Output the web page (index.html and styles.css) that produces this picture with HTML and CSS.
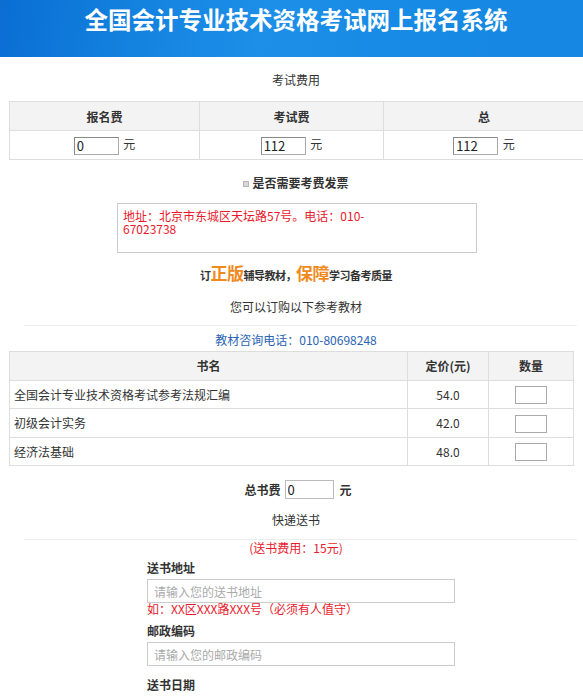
FILE: index.html
```html
<!DOCTYPE html>
<html lang="zh-CN">
<head>
<meta charset="utf-8">
<title>全国会计专业技术资格考试网上报名系统</title>
<link rel="stylesheet" href="styles.css">
</head>
<body>
<header class="banner">
  <h1 class="banner-title">全国会计专业技术资格考试网上报名系统</h1>
</header>
<main class="content">
  <div class="sec-title">考试费用</div>
  <table class="fee-table">
    <colgroup><col class="c1"><col class="c2"><col class="c3"></colgroup>
    <thead>
      <tr><th>报名费</th><th>考试费</th><th>总</th></tr>
    </thead>
    <tbody>
      <tr>
        <td><input class="fee-input" type="text" value="0"> 元</td>
        <td><input class="fee-input" type="text" value="112"> 元</td>
        <td><input class="fee-input" type="text" value="112"> 元</td>
      </tr>
    </tbody>
  </table>

  <div class="invoice-row"><span class="mini-check"></span><span class="invoice-label">是否需要考费发票</span></div>

  <div class="address-box">地址：北京市东城区天坛路57号。电话：010-<br>67023738</div>

  <div class="slogan">订<span class="big">正版</span>辅导教材，<span class="big">保障</span>学习备考质量</div>

  <div class="sub-title">您可以订购以下参考教材</div>
  <div class="divider"></div>
  <div class="phone">教材咨询电话：010-80698248</div>

  <table class="book-table">
    <colgroup><col class="b1"><col class="b2"><col class="b3"></colgroup>
    <thead>
      <tr><th>书名</th><th>定价(元)</th><th>数量</th></tr>
    </thead>
    <tbody>
      <tr><td class="name">全国会计专业技术资格考试参考法规汇编</td><td>54.0</td><td><input class="qty" type="text"></td></tr>
      <tr><td class="name">初级会计实务</td><td>42.0</td><td><input class="qty" type="text"></td></tr>
      <tr><td class="name">经济法基础</td><td>48.0</td><td><input class="qty" type="text"></td></tr>
    </tbody>
  </table>

  <div class="total-row"><span class="bold">总书费</span><input class="total-input" type="text" value="0"><span class="bold">元</span></div>

  <div class="sub-title express">快递送书</div>
  <div class="divider divider-2"></div>
  <div class="ship-fee">(送书费用：15元)</div>

  <div class="form">
    <div class="label first">送书地址</div>
    <input class="field" type="text" placeholder="请输入您的送书地址">
    <div class="hint">如：XX区XXX路XXX号（必须有人值守）</div>
    <div class="label second">邮政编码</div>
    <input class="field" type="text" placeholder="请输入您的邮政编码">
    <div class="label third">送书日期</div>
  </div>
</main>
</body>
</html>
```
FILE: styles.css
```css
* { box-sizing: border-box; }
html, body { margin: 0; padding: 0; background: #fff; }
body {
  font-family: "Noto Sans CJK SC", "Microsoft YaHei", sans-serif;
  font-size: 12px;
  color: #333;
  overflow: hidden;
}
.banner {
  height: 57px;
  background: linear-gradient(100deg, #0a6ed3 0%, #1483e0 25%, #1d8fe8 45%, #168ae4 70%, #1687e2 100%);
  text-align: center;
  padding: 3px 0 0 9px;
}
.banner-title {
  margin: 0;
  color: #fff;
  font-size: 23.5px;
  line-height: 32px;
  font-weight: 700;
}
.content { padding-left: 9px; }
.sec-title {
  margin-top: 15px;
  line-height: 16px;
  text-align: center;
}
table { border-collapse: collapse; }
th, td {
  border: 1px solid #ddd;
  height: 29px;
  padding: 0;
  text-align: center;
  font-size: 12px;
}
th { background: #f3f3f3; font-weight: 700; color: #333; }
.fee-table { margin-top: 13px; width: 575px; table-layout: fixed; }
.fee-table .c1 { width: 190px; }
.fee-table .c2 { width: 184px; }
.fee-table .c3 { width: 201px; }
.fee-input {
  width: 45px;
  height: 18px;
  border: 1px solid #aaa;
  border-top-color: #8a8a8a;
  border-left-color: #8a8a8a;
  padding: 0 2px;
  font: 13px "Noto Sans CJK SC", sans-serif;
  color: #222;
  vertical-align: middle;
  margin-right: 2px;
}
.invoice-row {
  margin-top: 15px;
  line-height: 16px;
  text-align: center;
}
.mini-check {
  display: inline-block;
  width: 6px;
  height: 6px;
  background: #d8d8d8;
  border: 1px solid #b5b5b5;
  margin-right: 3px;
  vertical-align: 1px;
}
.invoice-label { font-weight: 700; }
.address-box {
  margin: 12px 0 0 108px;
  width: 360px;
  height: 50px;
  border: 1px solid #ccc;
  color: #e8192c;
  font-size: 12px;
  line-height: 13px;
  padding: 5px 5px 0;
}
.slogan {
  margin-top: 9px;
  line-height: 22px;
  text-align: center;
  font-weight: 700;
  font-size: 11px;
  color: #333;
  letter-spacing: -0.5px;
}
.slogan .big { font-size: 17px; color: #f08a1e; letter-spacing: -0.5px; }
.sub-title {
  margin-top: 13px;
  line-height: 16px;
  text-align: center;
  font-size: 12px;
}
.divider {
  margin: 10px 6px 0 15px;
  height: 1px;
  background: #ececec;
}
.phone {
  margin-top: 6px;
  line-height: 16px;
  text-align: center;
  color: #2a64b4;
}
.book-table { margin-top: 3px; width: 564px; table-layout: fixed; }
.book-table th, .book-table td { height: 28.5px; }
.book-table .b1 { width: 398px; }
.book-table .b2 { width: 81px; }
.book-table .b3 { width: 85px; }
.book-table td.name { text-align: left; padding-left: 4px; }
.qty {
  width: 32px;
  height: 18px;
  border: 1px solid #aaa;
  vertical-align: middle;
}
.total-row {
  margin-top: 14px;
  height: 20px;
  text-align: center;
  line-height: 20px;
  padding-left: 4px;
}
.bold { font-weight: 700; }
.total-input {
  width: 49px;
  height: 19px;
  border: 1px solid #bbb;
  padding: 0 2px;
  font: 13px "Noto Sans CJK SC", sans-serif;
  color: #222;
  vertical-align: top;
  margin: 0 6px 0 4px;
}
.express { margin-top: 12px; }
.divider-2 { margin-top: 11px; }
.ship-fee {
  line-height: 15px;
  text-align: center;
  color: #e8192c;
}
.form {
  margin-left: 138px;
  width: 308px;
}
.label { font-weight: 700; line-height: 16px; }
.label.first { margin-top: 5px; }
.label.second { margin-top: 8px; }
.label.third { margin-top: 11px; }
.field {
  display: block;
  width: 308px;
  height: 24px;
  margin-top: 3px;
  border: 1px solid #ccc;
  padding: 0 6px;
  font: 12px "Noto Sans CJK SC", sans-serif;
  color: #333;
}
.field::placeholder { color: #aaa; }
.hint {
  line-height: 12px;
  color: #e8192c;
  font-size: 12px;
}
```
